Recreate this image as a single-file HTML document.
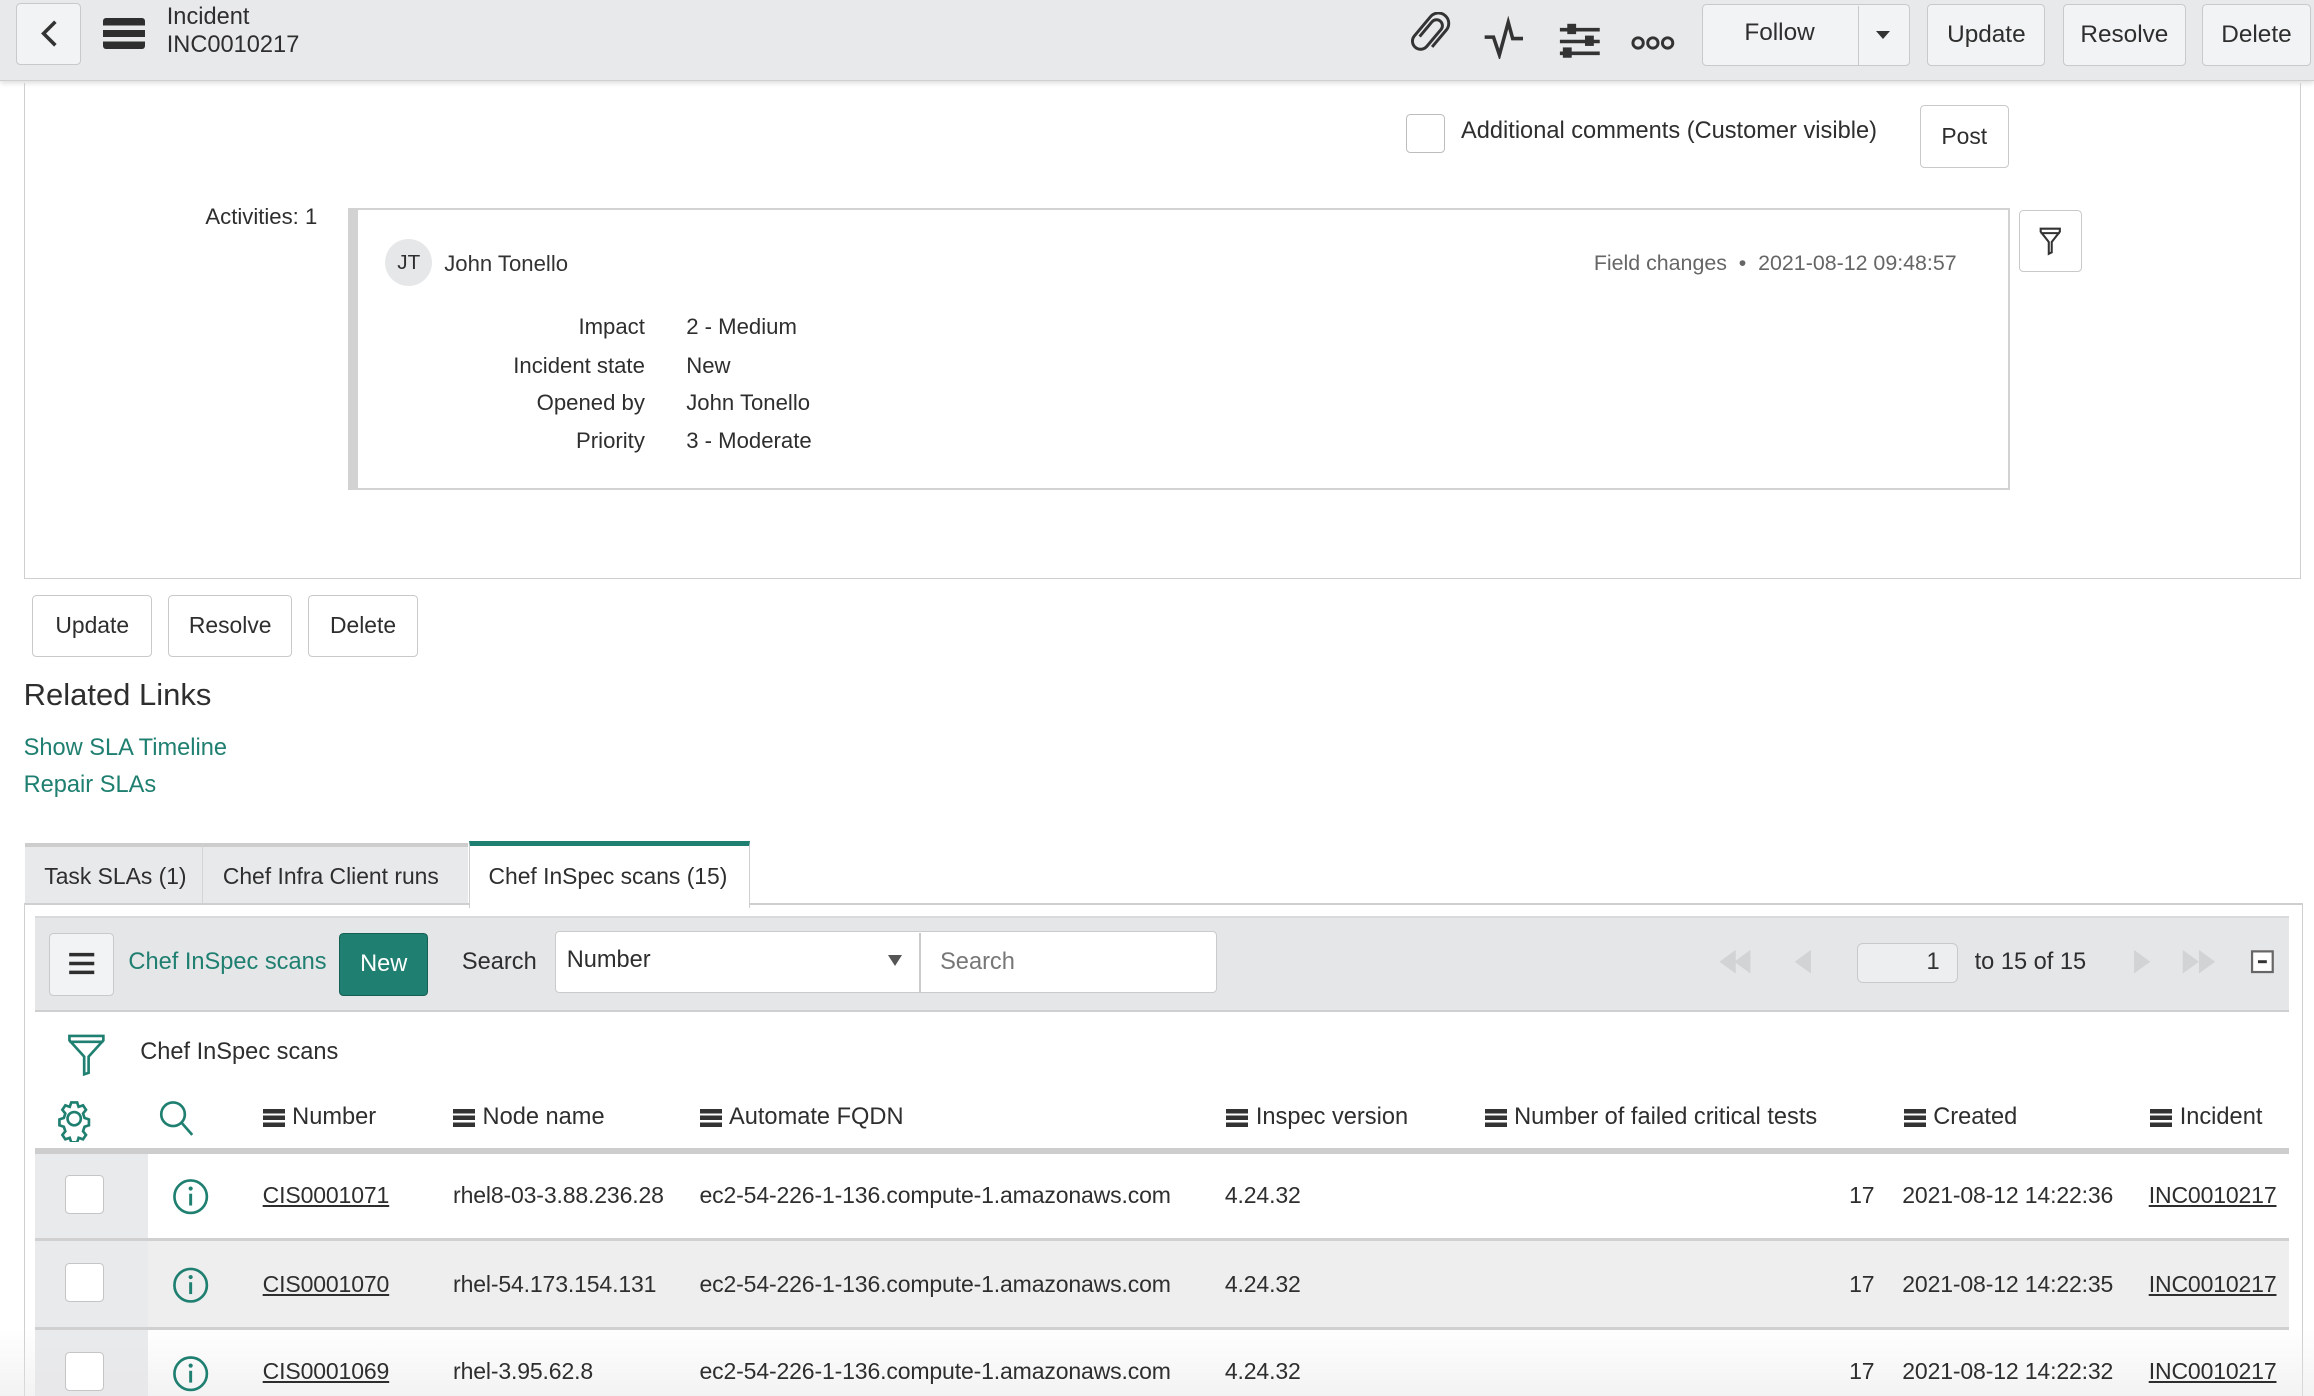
<!DOCTYPE html>
<html><head><meta charset="utf-8"><style>
html,body{margin:0;padding:0;background:#fff;overflow:hidden;width:2314px;height:1396px}
#w{zoom:1.47577;width:1568px;height:946px;position:relative;overflow:hidden;font-family:"Liberation Sans",sans-serif;color:#2e2e2e;font-size:15px}
.a{position:absolute}
.btn{position:absolute;border:1px solid #c9c9c9;border-radius:3px;background:#fff;box-sizing:border-box;text-align:center;font-size:15.5px;color:#2e2e2e}
.hb{background:#f2f3f4}
.t{position:absolute;white-space:nowrap}
.r .t{font-size:15.6px !important;letter-spacing:-0.1px}
.lbl{position:absolute;white-space:nowrap;text-align:right;width:200px}
.g{color:#1f7f70}
.ham{display:inline-block;vertical-align:-2px;width:15px;height:12px;background:linear-gradient(#333 0 3px,transparent 3px 4.5px,#333 4.5px 7.5px,transparent 7.5px 9px,#333 9px 12px);margin-right:5px}
.u{text-decoration:underline}
</style></head><body><div id="w">
<div class="a" style="left:0;top:0;width:1568px;height:54px;background:#e8e9eb;border-bottom:1px solid #cfcfcf;box-shadow:0 2px 3px rgba(0,0,0,.12)"></div>
<div class="btn hb" style="left:11px;top:2px;width:44px;height:42px"><svg width="44" height="40" viewBox="0 0 44 40"><path d="M26 12 L18 20 L26 28" fill="none" stroke="#333" stroke-width="2.4"/></svg></div>
<div class="a" style="left:70px;top:12px;width:28px;height:21px;background:linear-gradient(#2e2e2e 0 5px,transparent 5px 8px,#2e2e2e 8px 13px,transparent 13px 16px,#2e2e2e 16px 21px);border-radius:2px"></div>
<div class="t" style="left:113px;top:3px;font-size:16px">Incident</div>
<div class="t" style="left:113px;top:22px;font-size:16px">INC0010217</div>
<svg class="a" style="left:950px;top:8px" width="200" height="32" viewBox="0 0 200 32">
<g transform="rotate(40 19 16)"><path d="M15 22 V9 a4 4 0 0 1 8 0 V24 a5.5 5.5 0 0 1 -11 0 V7 a7 7 0 0 1 14 0 V22" fill="none" stroke="#333" stroke-width="2" transform="translate(-1,-1)"/></g>
<path d="M56 17 L62 17 L66 29 L72 7 L75 18 L82 18" fill="none" stroke="#333" stroke-width="2.4"/>
<g stroke="#333" stroke-width="2.4"><line x1="107" y1="12" x2="134" y2="12"/><line x1="107" y1="20" x2="134" y2="20"/><line x1="107" y1="28" x2="134" y2="28"/></g>
<rect x="112" y="8" width="6" height="7" fill="#333"/><rect x="124" y="16" width="6" height="7" fill="#333"/><rect x="109" y="24" width="6" height="7" fill="#333"/>
<g fill="none" stroke="#333" stroke-width="2"><circle cx="160" cy="21" r="3.5"/><circle cx="170" cy="21" r="3.5"/><circle cx="180" cy="21" r="3.5"/></g>
</svg>
<div class="btn hb" style="left:1153px;top:3px;width:141px;height:42px"></div>
<div class="t" style="left:1182px;top:13px;font-size:16.5px">Follow</div>
<div class="a" style="left:1259px;top:4px;width:1px;height:40px;background:#c9c9c9"></div>
<div class="a" style="left:1271px;top:21px;border-left:5px solid transparent;border-right:5px solid transparent;border-top:6px solid #333"></div>
<div class="btn hb" style="left:1306px;top:3px;width:80px;height:42px;line-height:40px;font-size:16.5px">Update</div>
<div class="btn hb" style="left:1398px;top:3px;width:83px;height:42px;line-height:40px;font-size:16.5px">Resolve</div>
<div class="btn hb" style="left:1492px;top:3px;width:74px;height:42px;line-height:40px;font-size:16.5px">Delete</div>
<div class="a" style="left:16px;top:56px;width:1542px;height:336px;border:1px solid #cfcfcf;border-top:none"></div>
<div class="a" style="left:953px;top:77px;width:25px;height:25px;border:1px solid #bdbdbd;border-radius:3px;background:#fff"></div>
<div class="t" style="left:990px;top:80px;font-size:16px">Additional comments (Customer visible)</div>
<div class="btn" style="left:1301px;top:71px;width:60px;height:43px;line-height:41px">Post</div>
<div class="lbl" style="left:15px;top:138px">Activities: 1</div>
<div class="a" style="left:236px;top:141px;width:1118px;height:188px;border:2px solid #d2d2d2;border-left:7px solid #d2d2d2;background:#fff"></div>
<div class="a" style="left:261px;top:162px;width:32px;height:32px;border-radius:50%;background:#e6e7e8;text-align:center;line-height:32px;font-size:14px">JT</div>
<div class="t" style="left:301px;top:170px;color:#333">John Tonello</div>
<div class="t" style="left:1080px;top:170px;color:#666;font-size:14.5px">Field changes &nbsp;•&nbsp; 2021-08-12 09:48:57</div>
<div class="lbl" style="left:237px;top:213px">Impact</div><div class="t" style="left:465px;top:213px">2 - Medium</div>
<div class="lbl" style="left:237px;top:239px">Incident state</div><div class="t" style="left:465px;top:239px">New</div>
<div class="lbl" style="left:237px;top:264px">Opened by</div><div class="t" style="left:465px;top:264px">John Tonello</div>
<div class="lbl" style="left:237px;top:290px">Priority</div><div class="t" style="left:465px;top:290px">3 - Moderate</div>
<div class="btn" style="left:1368px;top:142px;width:43px;height:42px"><svg width="41" height="40" viewBox="0 0 41 40"><path d="M14 12 H27 V14 L21.5 21 V28 L19.5 29 V21 L14 14 Z M14 15 H27" fill="none" stroke="#333" stroke-width="1.4"/></svg></div>
<div class="btn" style="left:22px;top:403px;width:81px;height:42px;line-height:40px">Update</div>
<div class="btn" style="left:114px;top:403px;width:84px;height:42px;line-height:40px">Resolve</div>
<div class="btn" style="left:209px;top:403px;width:74px;height:42px;line-height:40px">Delete</div>
<div class="t" style="left:16px;top:459px;font-size:21px">Related Links</div>
<div class="t g" style="left:16px;top:498px;font-size:16px">Show SLA Timeline</div>
<div class="t g" style="left:16px;top:523px;font-size:16px">Repair SLAs</div>
<div class="a" style="left:16px;top:612px;width:1543px;height:340px;border-left:1px solid #cfcfcf;border-right:1px solid #cfcfcf;border-top:2px solid #cfcfcf"></div>
<div class="a" style="left:17px;top:571px;width:120px;height:41px;background:#e8e9eb;border-top:3px solid #cdcdcd;box-sizing:border-box"></div>
<div class="a" style="left:137px;top:571px;width:180px;height:41px;background:#e8e9eb;border-top:3px solid #cdcdcd;border-left:1px solid #d4d4d4;box-sizing:border-box"></div>
<div class="a" style="left:318px;top:570px;width:190px;height:45px;background:#fff;border-top:4px solid #1f7f70;border-left:1px solid #cfcfcf;border-right:1px solid #cfcfcf;box-sizing:border-box"></div>
<div class="t" style="left:30px;top:585px;font-size:15.5px">Task SLAs (1)</div>
<div class="t" style="left:151px;top:585px;font-size:15.5px">Chef Infra Client runs</div>
<div class="t" style="left:331px;top:585px;font-size:15.5px">Chef InSpec scans (15)</div>
<div class="a" style="left:24px;top:621px;width:1527px;height:62px;background:#e4e6e8;border-top:2px solid #d8dadc;border-bottom:2px solid #cfcfcf"></div>
<div class="btn hb" style="left:33px;top:632px;width:44px;height:43px"><svg width="42" height="41" viewBox="0 0 42 41"><g stroke="#2e2e2e" stroke-width="2.4"><line x1="13" y1="14" x2="30" y2="14"/><line x1="13" y1="20" x2="30" y2="20"/><line x1="13" y1="26" x2="30" y2="26"/></g></svg></div>
<div class="t g" style="left:87px;top:643px;font-size:16px">Chef InSpec scans</div>
<div class="a" style="left:230px;top:632px;width:60px;height:43px;background:#1f7f70;border:1px solid #165f54;border-radius:3px;box-sizing:border-box;color:#fff;text-align:center;line-height:41px;font-size:16px">New</div>
<div class="t" style="left:313px;top:643px;font-size:16px">Search</div>
<div class="a" style="left:376px;top:631px;width:449px;height:42px;background:#fff;border:1px solid #cbcbcb;border-radius:3px;box-sizing:border-box"></div>
<div class="a" style="left:623px;top:632px;width:1px;height:40px;background:#cbcbcb"></div>
<div class="t" style="left:384px;top:642px;font-size:16px">Number</div>
<div class="a" style="left:602px;top:647px;border-left:5px solid transparent;border-right:5px solid transparent;border-top:8px solid #555"></div>
<div class="t" style="left:637px;top:643px;font-size:16px;color:#777">Search</div>
<svg class="a" style="left:1160px;top:640px" width="390" height="26" viewBox="0 0 390 26">
<g fill="#d2d3d5"><path d="M5 12 L16 4 V20Z"/><path d="M15 12 L26 4 V20Z"/><path d="M56 12 L67 4 V20Z"/>
<path d="M286 4 L297 12 L286 20Z"/><path d="M319 4 L330 12 L319 20Z"/><path d="M330 4 L341 12 L330 20Z"/></g>
<rect x="366" y="5" width="14" height="14" fill="#fff" stroke="#666" stroke-width="1.5"/><line x1="370" y1="12" x2="376" y2="12" stroke="#333" stroke-width="2"/>
</svg>
<div class="a" style="left:1258px;top:639px;width:69px;height:27px;border:1px solid #c9c9c9;border-radius:4px;background:#eceeef;box-sizing:border-box;text-align:right;padding-right:12px;line-height:25px;font-size:16px;color:#333">1</div>
<div class="t" style="left:1338px;top:643px;font-size:16px">to 15 of 15</div>
<svg class="a" style="left:44px;top:700px" width="30" height="30" viewBox="0 0 30 30"><path d="M3 2 H26 V5 L16 16 V27 L13 28 V16 L3 5Z M3 6 H26" fill="none" stroke="#1f7f70" stroke-width="1.8"/></svg>
<div class="t" style="left:95px;top:704px;font-size:16px">Chef InSpec scans</div>
<svg class="a" style="left:37px;top:744px" width="100" height="30" viewBox="0 0 100 30">
<g fill="none" stroke="#1f7f70" stroke-width="1.8"><circle cx="13" cy="14" r="4.5"/><path d="M11 3 h4 l1 3 3 -1 2 3 -2 2.5 1 3 3 1 v4 l-3 1 -1 3 2 2.5 -2 3 -3 -1 -1 3 h-4 l-1 -3 -3 1 -2 -3 2 -2.5 -1 -3 -3 -1 v-4 l3 -1 1 -3 -2 -2.5 2 -3 3 1z"/>
<circle cx="80" cy="11" r="8"/><line x1="86" y1="17" x2="93" y2="25"/></g></svg>
<div class="t" style="left:178px;top:748px;font-size:16px"><span class="ham"></span>Number</div>
<div class="t" style="left:307px;top:748px;font-size:16px"><span class="ham"></span>Node name</div>
<div class="t" style="left:474px;top:748px;font-size:16px"><span class="ham"></span>Automate FQDN</div>
<div class="t" style="left:831px;top:748px;font-size:16px"><span class="ham"></span>Inspec version</div>
<div class="t" style="left:1006px;top:748px;font-size:16px"><span class="ham"></span>Number of failed critical tests</div>
<div class="t" style="left:1290px;top:748px;font-size:16px"><span class="ham"></span>Created</div>
<div class="t" style="left:1457px;top:748px;font-size:16px"><span class="ham"></span>Incident</div>
<div class="a" style="left:24px;top:778px;width:1527px;height:4px;background:#cdcdcd"></div>
<div class="a" style="left:24px;top:782px;width:76px;height:164px;background:#e9eaec"></div>
<div class="a" style="left:100px;top:841px;width:1451px;height:59px;background:#eeeeef"></div>
<div class="a" style="left:24px;top:839px;width:1527px;height:2px;background:#d0d0d0"></div>
<div class="a" style="left:24px;top:899px;width:1527px;height:2px;background:#d0d0d0"></div>
<div class="a" style="left:0;top:900px;width:1568px;height:46px;background:linear-gradient(rgba(255,255,255,0),rgba(230,230,232,.5))"></div>
<div class="a" style="left:44px;top:796px;width:25px;height:25px;border:1px solid #c5c5c5;border-radius:3px;background:#fff"></div>
<div class="a" style="left:44px;top:856px;width:25px;height:25px;border:1px solid #c5c5c5;border-radius:3px;background:#fff"></div>
<div class="a" style="left:44px;top:916px;width:25px;height:25px;border:1px solid #c5c5c5;border-radius:3px;background:#fff"></div>
<svg class="a" style="left:115px;top:797px" width="30" height="150" viewBox="0 0 30 150"><g fill="none" stroke="#1f7f70" stroke-width="1.8"><circle cx="14" cy="14" r="11"/><circle cx="14" cy="74" r="11"/><circle cx="14" cy="134" r="11"/></g>
<g fill="#1f7f70"><circle cx="14" cy="8.5" r="1.4"/><rect x="13" y="12" width="2" height="8"/><circle cx="14" cy="68.5" r="1.4"/><rect x="13" y="72" width="2" height="8"/><circle cx="14" cy="128.5" r="1.4"/><rect x="13" y="132" width="2" height="8"/></g></svg>
<div class="r">
<div class="t u" style="left:178px;top:801px">CIS0001071</div>
<div class="t" style="left:307px;top:801px">rhel8-03-3.88.236.28</div>
<div class="t" style="left:474px;top:801px">ec2-54-226-1-136.compute-1.amazonaws.com</div>
<div class="t" style="left:830px;top:801px">4.24.32</div>
<div class="t" style="left:1253px;top:801px">17</div>
<div class="t" style="left:1289px;top:801px">2021-08-12 14:22:36</div>
<div class="t u" style="left:1456px;top:801px">INC0010217</div>
<div class="t u" style="left:178px;top:861px">CIS0001070</div>
<div class="t" style="left:307px;top:861px">rhel-54.173.154.131</div>
<div class="t" style="left:474px;top:861px">ec2-54-226-1-136.compute-1.amazonaws.com</div>
<div class="t" style="left:830px;top:861px">4.24.32</div>
<div class="t" style="left:1253px;top:861px">17</div>
<div class="t" style="left:1289px;top:861px">2021-08-12 14:22:35</div>
<div class="t u" style="left:1456px;top:861px">INC0010217</div>
<div class="t u" style="left:178px;top:920px">CIS0001069</div>
<div class="t" style="left:307px;top:920px">rhel-3.95.62.8</div>
<div class="t" style="left:474px;top:920px">ec2-54-226-1-136.compute-1.amazonaws.com</div>
<div class="t" style="left:830px;top:920px">4.24.32</div>
<div class="t" style="left:1253px;top:920px">17</div>
<div class="t" style="left:1289px;top:920px">2021-08-12 14:22:32</div>
<div class="t u" style="left:1456px;top:920px">INC0010217</div>
</div>
</div></body></html>
